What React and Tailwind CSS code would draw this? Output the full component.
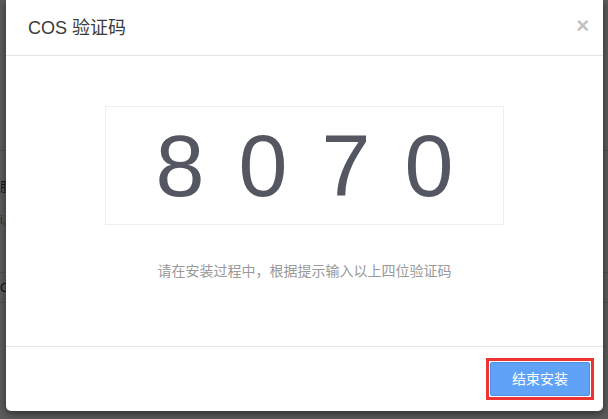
export default function App() {
  const font = { fontFamily: '"Liberation Sans", "Noto Sans CJK SC", Arial, sans-serif' };
  return (
    <div className="relative w-[608px] h-[419px] overflow-hidden bg-white" style={font}>
      {/* background page */}
      <div className="flex flex-col pt-[150px]">
        <div className="border-t border-[#ddd] h-[122px] flex flex-col pt-[26px] gap-[14px] text-[13px] text-[#333]">
          <div>服务器</div>
          <div className="text-[#888] text-[12px]">i,</div>
        </div>
        <div className="border-t border-[#ddd] h-[30px] flex items-center text-[13px] text-[#333]">O</div>
        <div className="border-t border-[#ddd]" />
      </div>
      {/* overlay */}
      <div className="absolute inset-0 bg-[rgba(0,0,0,0.64)]" />
      {/* modal */}
      <div className="absolute left-[6px] top-0 w-[597px] h-[411px] bg-white rounded-b-[5px] shadow-[0_3px_9px_rgba(0,0,0,0.5)] flex flex-col">
        <div className="h-[56px] flex items-center justify-between pl-[22px] pr-[14px] border-b border-[#e5e5e5]">
          <div className="text-[18px] text-[#3a3a3a] leading-none">COS 验证码</div>
          <div className="text-[22px] font-bold text-[#c2c2c2] leading-none -mt-[4px]">×</div>
        </div>
        <div className="flex-1 flex flex-col items-center pt-[50px] border-b border-[#e5e5e5]">
          <div className="w-[399px] h-[119px] border border-[#eeeeee] flex items-center justify-center gap-[34px] text-[88px] leading-none text-[#545761]">
            <span>8</span>
            <span>0</span>
            <span>7</span>
            <span>0</span>
          </div>
          <div className="mt-[36px] text-[14px] leading-[20px] text-[#999]">请在安装过程中，根据提示输入以上四位验证码</div>
        </div>
        <div className="h-[64px] flex items-center justify-end pr-[9px]">
          <div className="border-[3px] border-[#ee3333] p-[1px]">
            <button className="block w-[100px] h-[34px] bg-[#5fa2f6] border border-[#4e8fe4] rounded-[2px] text-white text-[14px]">
              结束安装
            </button>
          </div>
        </div>
      </div>
    </div>
  );
}
